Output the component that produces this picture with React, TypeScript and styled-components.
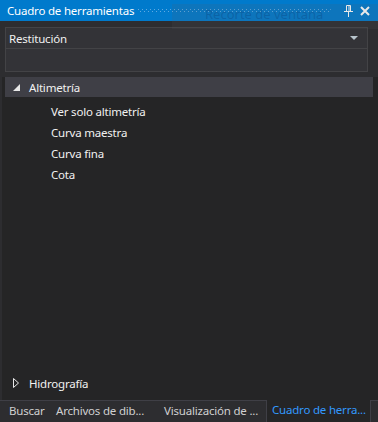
import styled, { createGlobalStyle } from "styled-components";

const GlobalStyle = createGlobalStyle`
    html, body {
        margin: 0;
        padding: 0;
        background: #2d2d30;
    }
    * {
        box-sizing: border-box;
    }
`;

const Window = styled.div`
    position: relative;
    width: 378px;
    height: 422px;
    display: flex;
    flex-direction: column;
    background: #2d2d30;
    font-family: "Noto Sans", "Open Sans", sans-serif;
    font-size: 11.5px;
    letter-spacing: -0.2px;
    color: #f1f1f1;
    overflow: hidden;
`;

const TitleBar = styled.div`
    height: 21px;
    flex: none;
    display: flex;
    align-items: center;
    padding: 0 6px 0 7px;
    background: #007acc;
    color: #ffffff;
`;

const TitleText = styled.span`
    white-space: nowrap;
    line-height: 21px;
`;

const Grip = styled.svg`
    flex: 1;
    height: 4px;
    margin: 0 7px 0 4px;
`;

const TitleButton = styled.span`
    width: 14px;
    height: 14px;
    display: flex;
    align-items: center;
    justify-content: center;
    margin-left: 3px;
`;

const SnipGhost = styled.div`
    position: absolute;
    left: 172px;
    right: 0;
    top: 4px;
    height: 25px;
    background: rgba(90, 90, 95, 0.14);
    color: rgba(10, 70, 130, 0.38);
    font-size: 13px;
    letter-spacing: 0;
    padding: 1px 0 0 33px;
    pointer-events: none;
`;

const Toolbar = styled.div`
    flex: none;
    padding: 6px 10px 5px 5px;
    display: flex;
    flex-direction: column;
`;

const Field = styled.div<{ $first?: boolean }>`
    height: ${p => (p.$first ? 22 : 23)}px;
    display: flex;
    align-items: center;
    justify-content: space-between;
    padding: 0 9px 0 3px;
    background: #333337;
    border: 1px solid #434346;
    border-top: ${p => (p.$first ? "1px solid #434346" : "none")};
    color: #f1f1f1;
`;

const Arrow = styled.span`
    width: 0;
    height: 0;
    border-left: 4px solid transparent;
    border-right: 4px solid transparent;
    border-top: 4px solid #b8c4cc;
`;

const Tree = styled.div`
    flex: 1;
    display: flex;
    flex-direction: column;
    background: #252526;
    margin: 0 0 0 2px;
    padding: 0 5px 0 3px;
`;

const GroupHeader = styled.div<{ $open?: boolean }>`
    height: 20px;
    display: flex;
    align-items: center;
    padding-left: 8px;
    background: ${p => (p.$open ? "#3f3f46" : "transparent")};
    color: #f1f1f1;
`;

const Caret = styled.span`
    width: 16px;
    display: flex;
    align-items: center;
`;

const Items = styled.div`
    flex: 1;
    display: flex;
    flex-direction: column;
    padding: 4px 0 0 46px;
`;

const Item = styled.div`
    height: 21px;
    line-height: 21px;
    color: #f1f1f1;
`;

const Footer = styled.div`
    padding-bottom: 7px;
`;

const TabBar = styled.div`
    height: 22px;
    flex: none;
    display: flex;
    background: #2d2d30;
    border-top: 1px solid #3f3f46;
    padding-left: 2px;
`;

const Tab = styled.div<{ $active?: boolean; $width: number }>`
    width: ${p => p.$width}px;
    padding-left: ${p => (p.$active ? 5 : 7)}px;
    line-height: 19px;
    white-space: nowrap;
    overflow: hidden;
    color: ${p => (p.$active ? "#3399ff" : "#d0d0d0")};
    background: ${p => (p.$active ? "#252526" : "transparent")};
    border-left: ${p => (p.$active ? "1px solid #3f3f46" : "none")};
    border-right: ${p => (p.$active ? "1px solid #3f3f46" : "none")};
    margin-top: ${p => (p.$active ? "-1px" : "0")};
`;

const PinIcon = () => (
    <svg width="9" height="12" viewBox="0 0 9 12">
        <path d="M2.5 0.5h4v6h-4z" fill="none" stroke="#fff" />
        <path d="M0 6.5h9" stroke="#fff" />
        <path d="M4.5 7v5" stroke="#fff" />
        <path d="M5 1v5" stroke="#fff" />
    </svg>
);

const CloseIcon = () => (
    <svg width="10" height="10" viewBox="0 0 10 10">
        <path d="M1 1L9 9M9 1L1 9" stroke="#fff" strokeWidth="2" />
    </svg>
);

const GripDots = () => (
    <Grip>
        <defs>
            <pattern id="grip" width="4" height="4" patternUnits="userSpaceOnUse">
                <rect x="0" y="0" width="1" height="1" fill="#5fa9e2" />
                <rect x="2" y="2" width="1" height="1" fill="#5fa9e2" />
            </pattern>
        </defs>
        <rect width="100%" height="4" fill="url(#grip)" />
    </Grip>
);

const OpenCaret = () => (
    <svg width="7" height="7" viewBox="0 0 7 7">
        <path d="M7 0V7H0Z" fill="#e8e8e8" />
    </svg>
);

const ClosedCaret = () => (
    <svg width="6" height="10" viewBox="0 0 6 10">
        <path d="M0.5 0.5L5.5 5L0.5 9.5Z" fill="none" stroke="#e8e8e8" />
    </svg>
);

const items = ["Ver solo altimetría", "Curva maestra", "Curva fina", "Cota"];

const tabs = [
    { label: "Buscar", width: 47 },
    { label: "Archivos de dib...", width: 108 },
    { label: "Visualización de ...", width: 109 },
    { label: "Cuadro de herra...", width: 105, active: true },
];

export default function App() {
    return (
        <>
            <GlobalStyle />
            <Window>
                <TitleBar>
                    <TitleText>Cuadro de herramientas</TitleText>
                    <GripDots />
                    <TitleButton>
                        <PinIcon />
                    </TitleButton>
                    <TitleButton>
                        <CloseIcon />
                    </TitleButton>
                </TitleBar>
                <SnipGhost>Recorte de ventana</SnipGhost>
                <Toolbar>
                    <Field $first>
                        <span>Restitución</span>
                        <Arrow />
                    </Field>
                    <Field />
                </Toolbar>
                <Tree>
                    <GroupHeader $open>
                        <Caret>
                            <OpenCaret />
                        </Caret>
                        Altimetría
                    </GroupHeader>
                    <Items>
                        {items.map(i => (
                            <Item key={i}>{i}</Item>
                        ))}
                    </Items>
                    <Footer>
                        <GroupHeader>
                            <Caret>
                                <ClosedCaret />
                            </Caret>
                            Hidrografía
                        </GroupHeader>
                    </Footer>
                </Tree>
                <TabBar>
                    {tabs.map(t => (
                        <Tab key={t.label} $active={t.active} $width={t.width}>
                            {t.label}
                        </Tab>
                    ))}
                </TabBar>
            </Window>
        </>
    );
}
